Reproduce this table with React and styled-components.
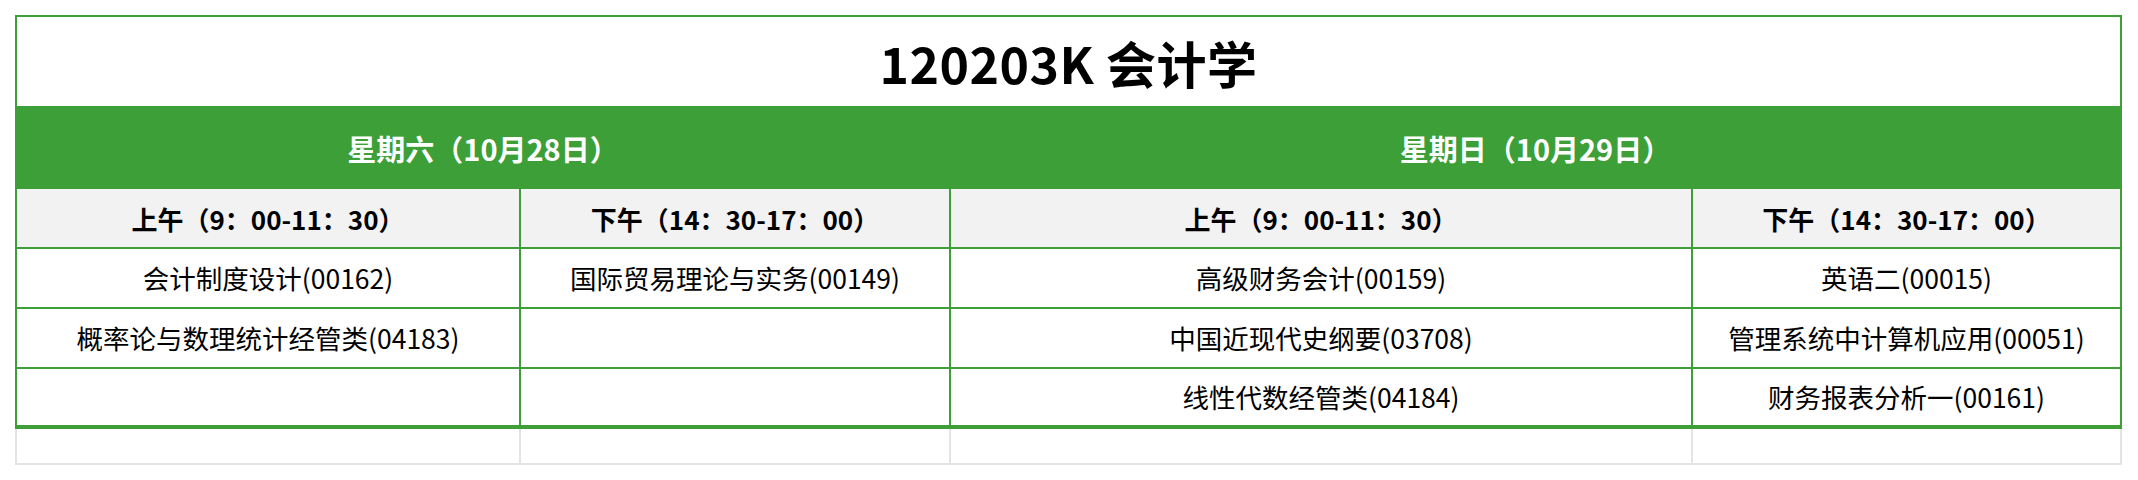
import * as React from 'react'
import styled, { createGlobalStyle } from 'styled-components'

const GREEN = '#3c9f37'
const LINE_GRAY = '#e4e4e4'
const COLS = '502px 428px 740px 427px'

const GlobalStyle = createGlobalStyle`
  body {
    margin: 0;
    background: #fff;
    font-family: "Microsoft YaHei", "Noto Sans CJK SC", "Noto Sans", sans-serif;
    color: #000;
  }
`

const Page = styled.div`
  padding: 15px 16px 0 15px;
  width: 2107px;
`

const Frame = styled.div`
  border: 2px solid ${GREEN};
`

const Title = styled.h1`
  margin: 0;
  height: 89px;
  display: flex;
  align-items: center;
  justify-content: center;
  font-size: 50px;
  font-weight: 700;
  letter-spacing: 0.5px;
`

const Grid = styled.div`
  display: grid;
  grid-template-columns: ${COLS};
  grid-template-rows: 81px 58px 58px 58px 56px;
  gap: 2px;
  padding-bottom: 2px;
  background: ${GREEN};
`

const Cell = styled.div`
  display: flex;
  align-items: center;
  justify-content: center;
  white-space: nowrap;
  background: #fff;
  font-size: 26.5px;
  padding-bottom: 2px;
`

const DayCell = styled(Cell)`
  grid-column: span 2;
  background: ${GREEN};
  color: #fff;
  font-size: 29px;
  font-weight: 700;
  padding: 2px 0 0;
`

const TimeCell = styled(Cell)`
  background: #f2f2f2;
  font-weight: 700;
  font-size: 26px;
  padding: 0;
`

const TailRow = styled.div`
  display: grid;
  grid-template-columns: ${COLS};
  grid-template-rows: 34px;
  gap: 2px;
  background: ${LINE_GRAY};
  border: 2px solid ${LINE_GRAY};
  border-top: none;
`

const TailCell = styled.div`
  background: #fff;
`

const days = ['星期六（10月28日）', '星期日（10月29日）']
const times = [
  '上午（9：00-11：30）',
  '下午（14：30-17：00）',
  '上午（9：00-11：30）',
  '下午（14：30-17：00）'
]
// one array per row, four slots each (empty string = empty cell)
const rows = [
  ['会计制度设计(00162)', '国际贸易理论与实务(00149)', '高级财务会计(00159)', '英语二(00015)'],
  ['概率论与数理统计经管类(04183)', '', '中国近现代史纲要(03708)', '管理系统中计算机应用(00051)'],
  ['', '', '线性代数经管类(04184)', '财务报表分析一(00161)']
]

export default function App() {
  return (
    <Page>
      <GlobalStyle />
      <Frame>
        <Title>120203K 会计学</Title>
        <Grid>
          {days.map(d => <DayCell key={d}>{d}</DayCell>)}
          {times.map((t, i) => <TimeCell key={i}>{t}</TimeCell>)}
          {rows.map((r, i) =>
            r.map((c, j) => <Cell key={`${i}-${j}`}>{c}</Cell>)
          )}
        </Grid>
      </Frame>
      <TailRow>
        {[0, 1, 2, 3].map(i => <TailCell key={i} />)}
      </TailRow>
    </Page>
  )
}
